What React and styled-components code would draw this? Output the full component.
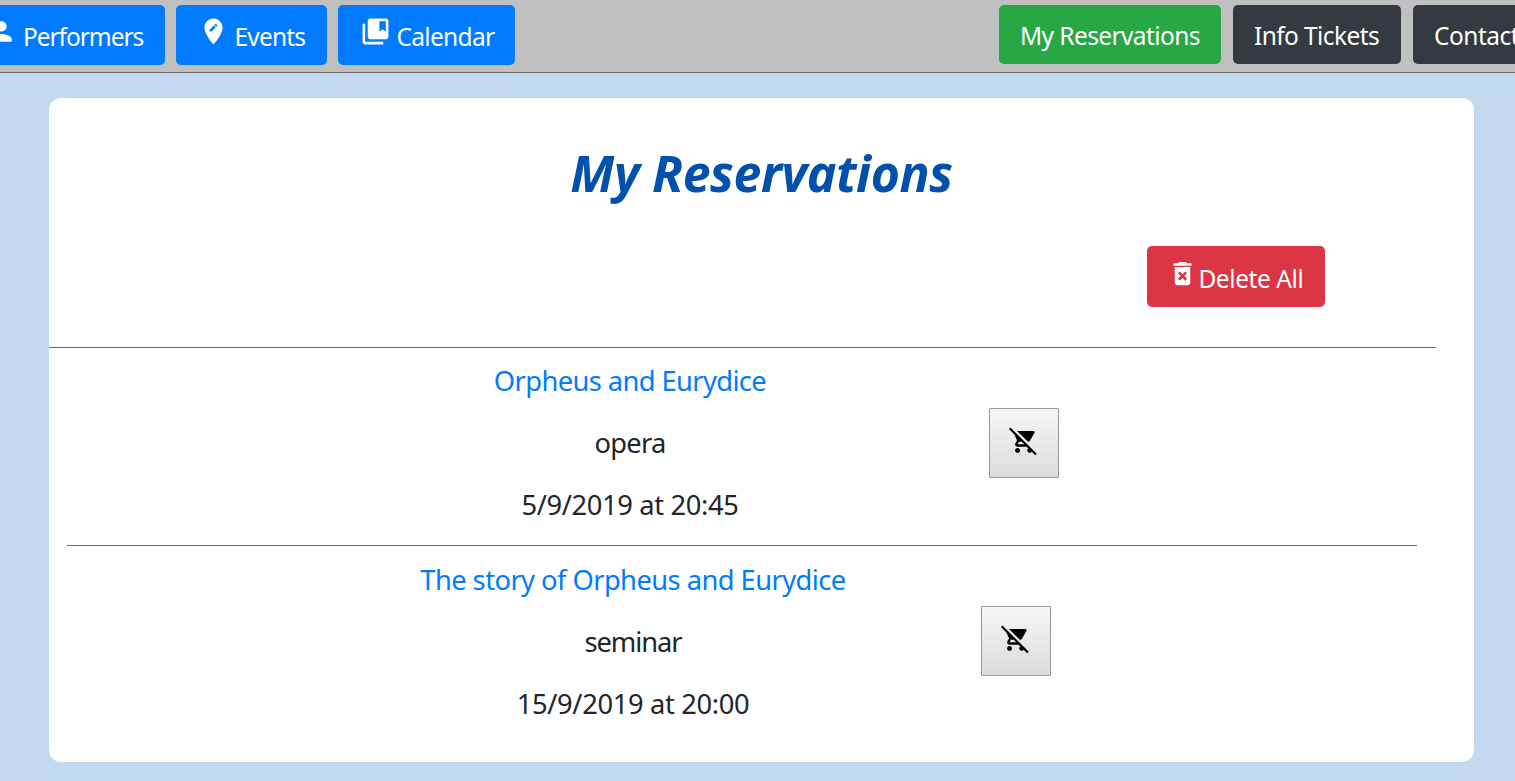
import React from 'react';
import styled, { createGlobalStyle } from 'styled-components';
import {
  MdPerson,
  MdEditLocation,
  MdCollectionsBookmark,
  MdDeleteForever,
  MdRemoveShoppingCart,
} from 'react-icons/md';

const GlobalStyle = createGlobalStyle`
  *, *::before, *::after { box-sizing: border-box; }
  html, body { margin: 0; }
  body {
    background: #c3d9ef;
    color: #212529;
    font-family: "Noto Sans", "Open Sans", sans-serif;
    overflow: hidden;
  }
`;

const Page = styled.div`
  height: 781px;
  overflow: hidden;
`;

const NavBar = styled.header`
  display: flex;
  justify-content: space-between;
  align-items: flex-start;
  height: 73px;
  padding-top: 5px;
  background: #c0c0c0;
  border-bottom: 1px solid #696969;
`;

const NavGroup = styled.nav`
  display: flex;
  gap: ${(p) => p.$gap}px;
  margin-left: ${(p) => p.$start || 0}px;
  margin-right: ${(p) => p.$end || 0}px;
`;

const tones = {
  primary: '#007bff',
  success: '#28a745',
  dark: '#343a40',
  danger: '#dc3545',
};

const Button = styled.button`
  display: flex;
  align-items: flex-start;
  flex: none;
  width: ${(p) => p.$width}px;
  height: ${(p) => p.$height}px;
  padding: 0 0 0 ${(p) => p.$inset ?? 21}px;
  border: 0;
  border-radius: 5px;
  background: ${(p) => tones[p.$tone]};
  color: #fff;
  font-family: inherit;
  font-size: 24.5px;
  line-height: 36px;
  white-space: nowrap;

  svg {
    flex: none;
    width: 31px;
    height: 31px;
    margin: ${(p) => p.$iconTop ?? 10.5}px ${(p) => p.$iconGap || 0}px 0 0;
  }
`;

const Label = styled.span`
  padding-top: ${(p) => p.$top}px;
  letter-spacing: ${(p) => p.$track}px;
`;

const Card = styled.main`
  width: 1425px;
  height: 664px;
  margin: 25px 0 0 49px;
  padding-top: 41px;
  border-radius: 12px;
  background: #fff;
`;

const Title = styled.h1`
  height: 69px;
  margin: 0;
  color: #0050ac;
  font-size: 50px;
  font-style: italic;
  font-weight: 700;
  line-height: 68px;
  letter-spacing: -0.4px;
  text-align: center;
`;

const Actions = styled.div`
  display: flex;
  justify-content: flex-end;
  height: 139px;
  padding: 38px 149px 0 0;
`;

const Divider = styled.hr`
  height: 1px;
  margin: 0 ${(p) => p.$right}px 0 ${(p) => p.$left}px;
  border: 0;
  background: #696969;
`;

const Reservation = styled.article`
  display: flex;
  height: 197px;
  padding-left: ${(p) => p.$left}px;
`;

const Details = styled.div`
  width: 500px;
  margin-right: ${(p) => p.$gap}px;
  padding-top: ${(p) => p.$top}px;
  font-size: 27.3px;
  line-height: 42px;
  text-align: center;
`;

const EventLink = styled.a`
  display: block;
  margin-bottom: 20px;
  color: #007bff;
  letter-spacing: ${(p) => p.$track}px;
`;

const Line = styled.p`
  margin: 0 0 20px;
  letter-spacing: ${(p) => p.$track}px;
`;

const RemoveButton = styled.button`
  display: flex;
  width: 70px;
  height: 70px;
  margin-top: 60px;
  padding: 16.5px 0 0 19px;
  border: 1px solid #999;
  border-radius: 1px;
  background: linear-gradient(#f6f6f6, #dcdcdc);
  color: #000;

  svg {
    width: 29.3px;
    height: 29.3px;
  }
`;

const reservations = [
  { name: 'Orpheus and Eurydice', kind: 'opera', when: '5/9/2019 at 20:45', left: 331, gap: 109, top: 12, tracks: [-0.6, -0.7, -0.35] },
  { name: 'The story of Orpheus and Eurydice', kind: 'seminar', when: '15/9/2019 at 20:00', left: 334, gap: 98, top: 13, tracks: [-0.55, -1.1, -0.35] },
];

export default function App() {
  return (
    <>
      <GlobalStyle />
      <Page>
        <NavBar>
          <NavGroup $gap={11} $start={-35}>
            <Button $tone="primary" $width={200} $height={60} $iconGap={6}>
              <MdPerson />
              <Label $top={14} $track={-1.05}>Performers</Label>
            </Button>
            <Button $tone="primary" $width={151} $height={60} $iconGap={6} $inset={21.5}>
              <MdEditLocation />
              <Label $top={14} $track={-0.8}>Events</Label>
            </Button>
            <Button $tone="primary" $width={177} $height={60} $iconGap={6} $inset={21.5}>
              <MdCollectionsBookmark />
              <Label $top={14} $track={-0.7}>Calendar</Label>
            </Button>
          </NavGroup>
          <NavGroup $gap={12} $end={-40}>
            <Button $tone="success" $width={222} $height={59}>
              <Label $top={13} $track={-0.6}>My Reservations</Label>
            </Button>
            <Button $tone="dark" $width={168} $height={59}>
              <Label $top={13} $track={-0.6}>Info Tickets</Label>
            </Button>
            <Button $tone="dark" $width={142} $height={59}>
              <Label $top={13} $track={-0.5}>Contact</Label>
            </Button>
          </NavGroup>
        </NavBar>
        <Card>
          <Title>My Reservations</Title>
          <Actions>
            <Button $tone="danger" $width={178} $height={61} $inset={20.4} $iconTop={11.5}>
              <MdDeleteForever />
              <Label $top={15} $track={-0.42}>Delete All</Label>
            </Button>
          </Actions>
          {reservations.map((r, i) => (
            <React.Fragment key={r.name}>
              <Divider $left={i ? 18 : 0} $right={i ? 57 : 38} />
              <Reservation $left={r.left}>
                <Details $gap={r.gap} $top={r.top}>
                  <EventLink $track={r.tracks[0]}>{r.name}</EventLink>
                  <Line $track={r.tracks[1]}>{r.kind}</Line>
                  <Line $track={r.tracks[2]}>{r.when}</Line>
                </Details>
                <RemoveButton aria-label="Remove reservation">
                  <MdRemoveShoppingCart />
                </RemoveButton>
              </Reservation>
            </React.Fragment>
          ))}
        </Card>
      </Page>
    </>
  );
}
